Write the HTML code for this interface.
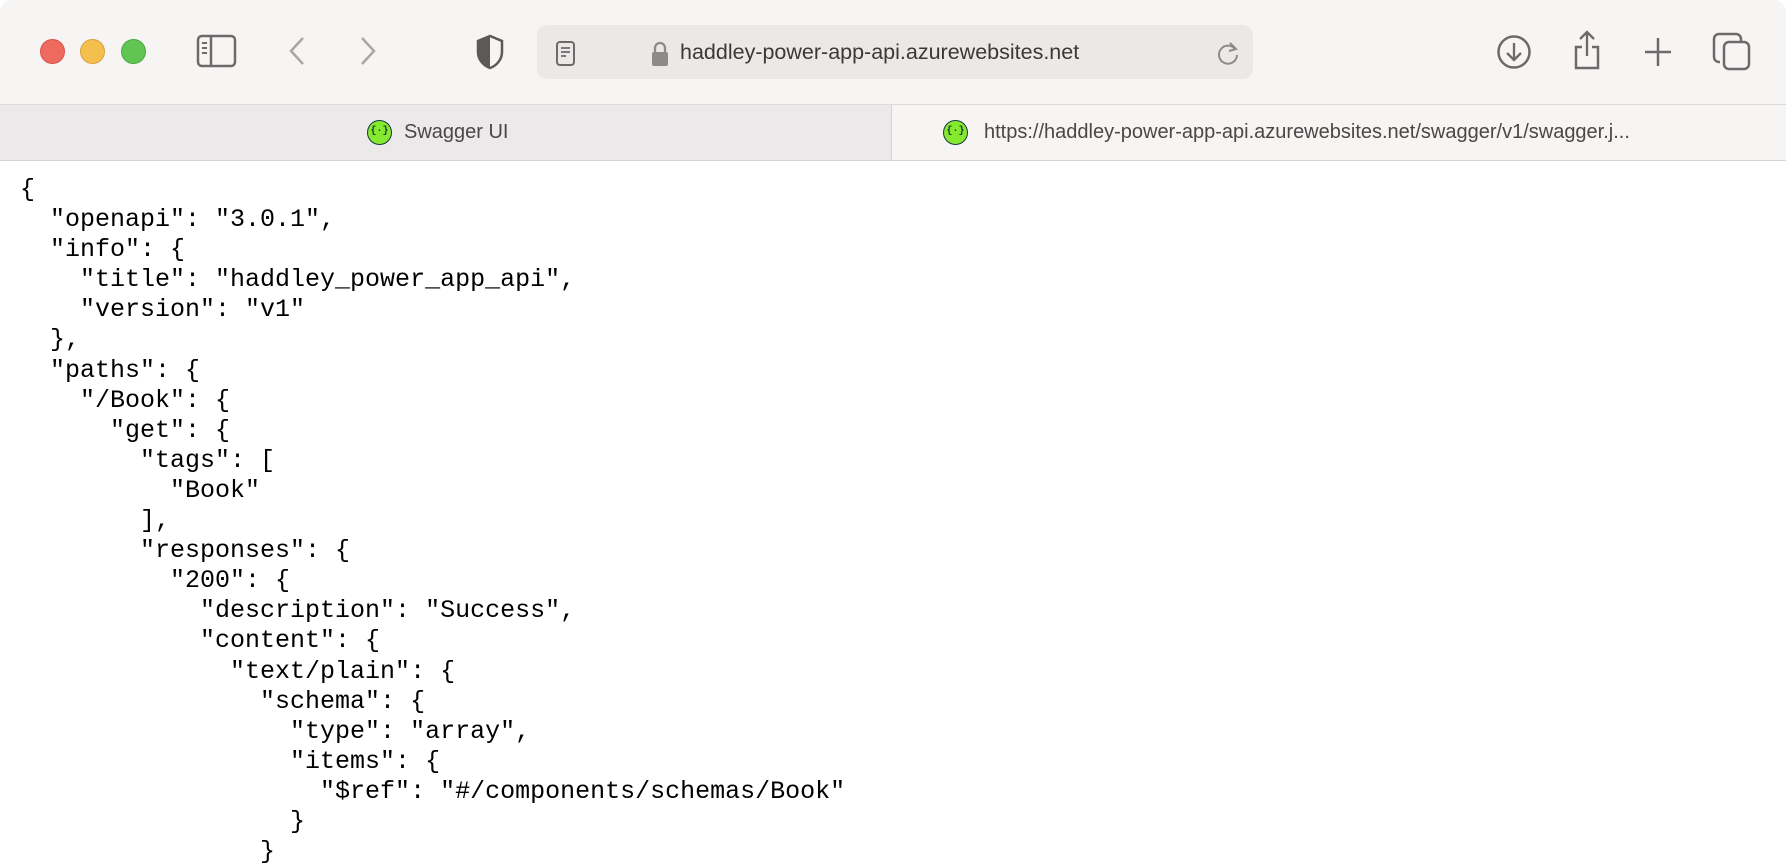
<!DOCTYPE html>
<html><head><meta charset="utf-8"><style>
*{margin:0;padding:0;box-sizing:border-box}
html,body{width:1786px;height:854px;overflow:hidden;background:#fff}
.top{position:absolute;left:0;top:0;width:1786px;height:104px;background:#f7f4f4;border-top-left-radius:12px;border-top-right-radius:12px}
.tabs{position:absolute;left:0;top:104px;width:1786px;height:57px;background:#f7f4f4;border-top:1px solid #dcd9d9;border-bottom:1px solid #d6d3d3}
.tab1{position:absolute;left:0;top:0;width:892px;height:55px;background:#ebe9e9;border-right:1px solid #d6d3d3}
.tabtxt{position:absolute;top:0;height:55px;font:20px "Liberation Sans",sans-serif;line-height:55px;color:#4a4747;white-space:nowrap}
.fav{position:absolute;top:15px;width:25px;height:25px;border-radius:50%;background:#85ea2d;border:1.5px solid #173647;font:bold 10px "Liberation Mono",monospace;line-height:22px;color:#173647;text-align:center}
.dot{position:absolute;top:39px;width:25px;height:25px;border-radius:50%}
.addr{position:absolute;left:537px;top:25px;width:716px;height:54px;background:#ebe8e8;border-radius:10px}
.url{position:absolute;left:680px;top:25px;height:54px;font:21.5px "Liberation Sans",sans-serif;line-height:54px;color:#3b3838}
pre{position:absolute;left:20px;top:175px;font:25px/30.1px "Liberation Mono",monospace;color:#000}
svg{position:absolute}
</style></head><body>
<div class="top"></div>
<div class="dot" style="left:40px;background:#ed6a5e;border:1px solid #d85046"></div>
<div class="dot" style="left:80px;background:#f5bf4f;border:1px solid #d9a23a"></div>
<div class="dot" style="left:121px;background:#61c554;border:1px solid #4ba83f"></div>
<svg style="left:196px;top:34px" width="42" height="34" viewBox="0 0 42 34"><rect x="2" y="2" width="37" height="30" rx="4" fill="none" stroke="#6d6a6a" stroke-width="2.5"/><line x1="15" y1="2" x2="15" y2="32" stroke="#6d6a6a" stroke-width="2.5"/><path d="M6 9h5M6 14h5M6 19h5" stroke="#6d6a6a" stroke-width="2"/></svg>
<svg style="left:286px;top:35px" width="22" height="32"><path d="M17 3L5 16l12 13" fill="none" stroke="#a9a6a6" stroke-width="2.5"/></svg>
<svg style="left:357px;top:35px" width="22" height="32"><path d="M5 3l12 13L5 29" fill="none" stroke="#a9a6a6" stroke-width="2.5"/></svg>
<svg style="left:475px;top:34px" width="30" height="36" viewBox="0 0 30 36"><path d="M15 2L3 7v11c0 8 6 14 12 16 6-2 12-8 12-16V7z" fill="none" stroke="#5c5959" stroke-width="2.5"/><path d="M15 2L3 7v11c0 8 6 14 12 16z" fill="#5c5959"/></svg>
<div class="addr"></div>
<svg style="left:555px;top:40px" width="22" height="28"><rect x="2" y="2" width="17" height="23" rx="3" fill="none" stroke="#6d6a6a" stroke-width="2"/><path d="M6 8h9M6 12h9M6 16h5" stroke="#6d6a6a" stroke-width="1.8"/></svg>
<svg style="left:651px;top:41px" width="18" height="26"><path d="M4 11V7a5 5 0 0110 0v4" fill="none" stroke="#8d8a8a" stroke-width="2.3"/><rect x="1" y="11" width="16" height="14" rx="2" fill="#8d8a8a"/></svg>
<div class="url">haddley-power-app-api.azurewebsites.net</div>
<svg style="left:1216px;top:40px" width="24" height="26"><path d="M19 9A9 9 0 1 0 21 15" fill="none" stroke="#8d8a8a" stroke-width="2"/><path d="M14 3l6 6-7 2" fill="none" stroke="#8d8a8a" stroke-width="2"/></svg>
<svg style="left:1496px;top:34px" width="36" height="36"><circle cx="18" cy="18" r="15.5" fill="none" stroke="#6d6a6a" stroke-width="2.5"/><path d="M18 9v17M11 19l7 7 7-7" fill="none" stroke="#6d6a6a" stroke-width="2.3"/></svg>
<svg style="left:1570px;top:30px" width="36" height="40"><path d="M12 17H6v21h22V17h-6" fill="none" stroke="#6d6a6a" stroke-width="2.5"/><path d="M17 2v24M10 9l7-7 7 7" fill="none" stroke="#6d6a6a" stroke-width="2.3"/></svg>
<svg style="left:1643px;top:34px" width="30" height="34"><path d="M15 4v28M2 18h26" stroke="#6d6a6a" stroke-width="2.5"/></svg>
<svg style="left:1711px;top:32px" width="42" height="40"><rect x="13" y="10" width="25" height="27" rx="5" fill="none" stroke="#6d6a6a" stroke-width="2.5"/><path d="M9 30H8a5 5 0 01-5-5V7a5 5 0 015-5h17a5 5 0 015 5v2" fill="none" stroke="#6d6a6a" stroke-width="2.5"/></svg>
<div class="tabs"><div class="tab1"></div>
<div class="fav" style="left:367px">{·}</div><div class="tabtxt" style="left:404px">Swagger UI</div>
<div class="fav" style="left:943px">{·}</div><div class="tabtxt" style="left:984px">https://haddley-power-app-api.azurewebsites.net/swagger/v1/swagger.j...</div>
</div>
<pre>{
  "openapi": "3.0.1",
  "info": {
    "title": "haddley_power_app_api",
    "version": "v1"
  },
  "paths": {
    "/Book": {
      "get": {
        "tags": [
          "Book"
        ],
        "responses": {
          "200": {
            "description": "Success",
            "content": {
              "text/plain": {
                "schema": {
                  "type": "array",
                  "items": {
                    "$ref": "#/components/schemas/Book"
                  }
                }</pre>
</body></html>
